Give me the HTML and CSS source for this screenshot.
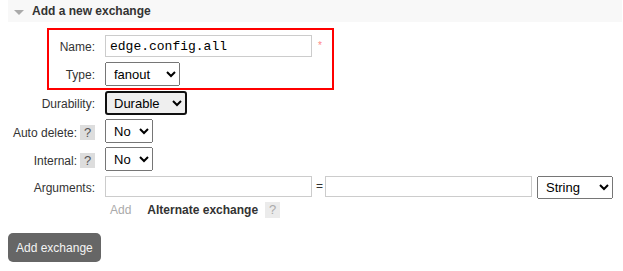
FILE: index.html
```html
<!DOCTYPE html>
<html>
<head>
	<meta charset="utf-8">
	<meta name="viewport" content="width=device-width, initial-scale=1">
	<title>Exchanges</title>
	<link rel="stylesheet" href="styles.css">
</head>
<body>
	<div class="section">
		<h2 class="section-title"><span class="arrow"></span>Add a new exchange</h2>
		<form class="exchange-form">
			<div class="highlight">
				<div class="row">
					<label class="label label-inner" for="name">Name:</label>
					<input class="text mono" id="name" type="text" value="edge.config.all">
					<span class="mand">*</span>
				</div>
				<div class="row row-select row-type">
					<label class="label label-inner" for="type">Type:</label>
					<select class="sel sel-type" id="type">
						<option>fanout</option>
						<option>direct</option>
						<option>headers</option>
						<option>topic</option>
					</select>
				</div>
			</div>
			<div class="row row-select row-durable">
				<label class="label" for="durable">Durability:</label>
				<select class="sel sel-durable" id="durable">
					<option>Durable</option>
					<option>Transient</option>
				</select>
			</div>
			<div class="row row-select row-gap">
				<label class="label" for="autodelete">Auto delete: <span class="help">?</span></label>
				<select class="sel sel-small" id="autodelete">
					<option>No</option>
					<option>Yes</option>
				</select>
			</div>
			<div class="row row-select row-gap">
				<label class="label" for="internal">Internal: <span class="help">?</span></label>
				<select class="sel sel-small" id="internal">
					<option>No</option>
					<option>Yes</option>
				</select>
			</div>
			<div class="row row-args">
				<label class="label label-args">Arguments:</label>
				<input class="text arg" type="text">
				<span class="equals">=</span>
				<input class="text arg" type="text">
				<select class="sel sel-kind">
					<option>String</option>
					<option>Number</option>
					<option>Boolean</option>
					<option>List</option>
				</select>
			</div>
			<div class="add-row">
				<span class="add-link">Add</span>
				<span class="alt">Alternate exchange</span>
				<span class="help help-off">?</span>
			</div>
			<button type="button" class="submit">Add exchange</button>
		</form>
	</div>
</body>
</html>
```

FILE: styles.css
```css
body{
	margin: 0;
	font-family: "Liberation Sans", Arial, sans-serif;
	font-size: 12px;
	color: #333;
	background: #fff;
}
.section{
	padding-left: 8px;
	padding-right: 1px;
}
.section-title{
	margin: 0;
	height: 22px;
	line-height: 22px;
	font-size: 12px;
	font-weight: bold;
	color: #333;
	background-color: #f8f8f8;
	display: flex;
	align-items: center;
}
.arrow{
	width: 0;
	height: 0;
	border-left: 5.5px solid transparent;
	border-right: 5.5px solid transparent;
	border-top: 5px solid #aaa;
	margin: 2px 8px 0 6px;
}
.highlight{
	margin-top: 6px;
	margin-left: 39px;
	width: 283px;
	border: 2px solid #f00;
	padding: 5px 0 2px 0;
}
.row{
	display: flex;
	align-items: center;
	height: 22px;
}
.row-select{
	height: 24px;
}
.row-type{
	margin-top: 5px;
}
.row-durable{
	margin-top: 1px;
}
.row-gap{
	margin-top: 4px;
}
.label{
	width: 87px;
	margin-right: 10px;
	text-align: right;
	padding-top: 2px;
	flex-shrink: 0;
	display: flex;
	justify-content: flex-end;
	align-items: baseline;
	gap: 3px;
}
.label-inner{
	width: 46px;
}
.text{
	box-sizing: border-box;
	height: 22px;
	border: 1px solid #ccc;
	padding: 0 4px;
	margin: 0;
	font-family: "Liberation Sans", Arial, sans-serif;
	font-size: 13px;
	color: #000;
}
.mono{
	width: 207px;
	font-family: "Liberation Mono", "Courier New", monospace;
	font-size: 13px;
}
.mand{
	color: #f88;
	font-size: 10px;
	margin-left: 6px;
	align-self: flex-start;
	margin-top: 5px;
}
.sel{
	box-sizing: border-box;
	height: 24px;
	margin: 0;
	font-family: "Liberation Sans", Arial, sans-serif;
	font-size: 13px;
	color: #000;
	padding-left: 4px;
}
.sel-type{
	width: 75px;
}
.sel-durable{
	width: 82px;
	border: 2px solid #101010;
	border-radius: 3px;
	padding-left: 3px;
}
.sel-small{
	width: 48px;
}
.help{
	display: inline-block;
	width: 15px;
	height: 15px;
	line-height: 16px;
	text-align: center;
	background: #ddd;
	color: #555;
	font-size: 13px;
}
.help-off{
	background: #ebebeb;
	color: #aaa;
	height: 16px;
	line-height: 16px;
}
.row-args{
	margin-top: 5px;
	height: 23px;
	align-items: flex-start;
}
.label-args{
	padding-top: 5px;
}
.arg{
	width: 207px;
	height: 21px;
}
.equals{
	padding: 3px 3px 0 4px;
	width: 6px;
}
.sel-kind{
	width: 76px;
	height: 23px;
	margin-left: 5px;
}
.add-row{
	margin-top: 3px;
	margin-left: 102px;
	height: 16px;
	display: flex;
	align-items: center;
}
.add-link{
	color: #aaa;
	margin-right: 16px;
}
.alt{
	font-weight: bold;
	margin-right: 7px;
}
.submit{
	margin-top: 15px;
	height: 29px;
	padding: 0 8px;
	border: none;
	border-radius: 5px;
	background-color: #666;
	color: #f4f4f4;
	font-family: "Liberation Sans", Arial, sans-serif;
	font-size: 12px;
}
```
